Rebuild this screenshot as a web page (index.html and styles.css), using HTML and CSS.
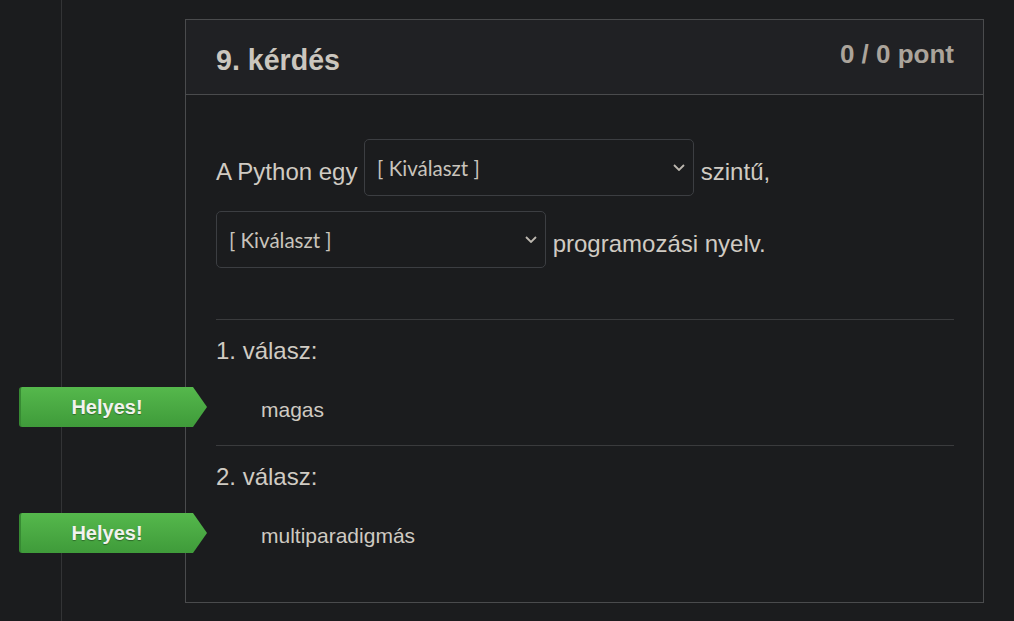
FILE: index.html
```html
<!DOCTYPE html>
<html lang="hu">
<head>
<meta charset="utf-8">
<title>9. kérdés</title>
<link rel="stylesheet" href="styles.css">
</head>
<body>
<div class="page">
  <div class="rail"></div>
  <main class="main">
    <section class="question">
      <header class="q-header">
        <h2 class="q-title">9. kérdés</h2>
        <span class="q-points">0 / 0 pont</span>
      </header>
      <div class="q-body">
        <p class="q-text">A Python egy <span class="select"><select class="select-input"><option>[ Kiválaszt ]</option></select><svg class="chevron" viewBox="0 0 12 7" width="12" height="7"><path d="M1 1l5 5 5-5" fill="none" stroke="currentColor" stroke-width="1.8"/></svg></span> szintű, <span class="select"><select class="select-input"><option>[ Kiválaszt ]</option></select><svg class="chevron" viewBox="0 0 12 7" width="12" height="7"><path d="M1 1l5 5 5-5" fill="none" stroke="currentColor" stroke-width="1.8"/></svg></span> programozási nyelv.</p>
        <div class="answers">
          <div class="answer">
            <div class="answer-label">1. válasz:</div>
            <div class="answer-row">
              <span class="badge">Helyes!</span>
              <span class="answer-text">magas</span>
            </div>
          </div>
          <div class="answer">
            <div class="answer-label">2. válasz:</div>
            <div class="answer-row">
              <span class="badge">Helyes!</span>
              <span class="answer-text">multiparadigmás</span>
            </div>
          </div>
        </div>
      </div>
    </section>
  </main>
</div>
</body>
</html>
```

FILE: styles.css
```css
html, body {
  margin: 0;
  padding: 0;
  background: #1b1c1e;
  height: 100%;
  overflow: hidden;
}

body {
  font-family: "Liberation Sans", Arial, sans-serif;
  color: #cfcac2;
}

.page {
  display: flex;
  min-height: 100%;
}

.rail {
  width: 61px;
  flex: none;
  border-right: 1px solid #333436;
}

.main {
  flex: none;
  padding: 19px 0 0 123px;
}

.question {
  width: 797px;
  border: 1px solid #4a4b4d;
  background: #1b1c1e;
}

.q-header {
  display: flex;
  justify-content: space-between;
  align-items: flex-start;
  height: 74px;
  padding: 0 29px 0 30px;
  background: #202124;
  border-bottom: 1px solid #4a4b4d;
}

.q-title {
  margin: 26px 0 0;
  font-size: 28.6px;
  font-weight: bold;
  color: #cbc6be;
  line-height: 1;
}

.q-points {
  margin-top: 21px;
  font-size: 26px;
  font-weight: bold;
  color: #aba49b;
  line-height: 1;
}

.q-body {
  padding: 36px 29px 31px 30px;
}

.q-text {
  margin: 0;
  font-size: 24px;
  line-height: 28px;
  color: #d0cbc3;
}

.select {
  position: relative;
  display: inline-flex;
  vertical-align: 4px;
  margin: 8px 0 7px;
  color: #bdb8b0;
}

.select-input {
  -webkit-appearance: none;
  appearance: none;
  width: 330px;
  height: 57px;
  margin: 0;
  padding: 0 36px 0 12px;
  border: 1px solid #3c3e42;
  border-radius: 5px;
  background: #1b1c1e;
  color: #c9c4bc;
  font-family: Lato, "Open Sans", sans-serif;
  font-size: 20.5px;
}

.chevron {
  position: absolute;
  right: 9px;
  top: 25px;
  pointer-events: none;
}

.answers {
  margin-top: 44px;
}

.answer {
  border-top: 1px solid #3a3b3d;
  padding-top: 17px;
}

.answer-label {
  font-size: 24px;
  line-height: 28px;
  color: #d0cbc3;
}

.answer-row {
  position: relative;
  display: flex;
  align-items: center;
  height: 40px;
  margin-top: 22px;
  margin-bottom: 18px;
}

.answer-text {
  padding-left: 45px;
  padding-top: 6px;
  font-size: 21px;
  color: #cfcac2;
}

.badge {
  position: absolute;
  left: -197px;
  top: 0;
  width: 188px;
  height: 40px;
  box-sizing: border-box;
  padding-right: 14px;
  border-left: 2px solid #378a33;
  border-radius: 3px 0 0 3px;
  background: linear-gradient(#55b84c, #3f9b3a);
  clip-path: polygon(0 0, 174px 0, 188px 50%, 174px 100%, 0 100%);
  display: flex;
  align-items: center;
  justify-content: center;
  font-size: 20px;
  font-weight: bold;
  color: #f2f2ee;
  text-shadow: 0 1px 1px rgba(0,0,0,0.35);
}
```
